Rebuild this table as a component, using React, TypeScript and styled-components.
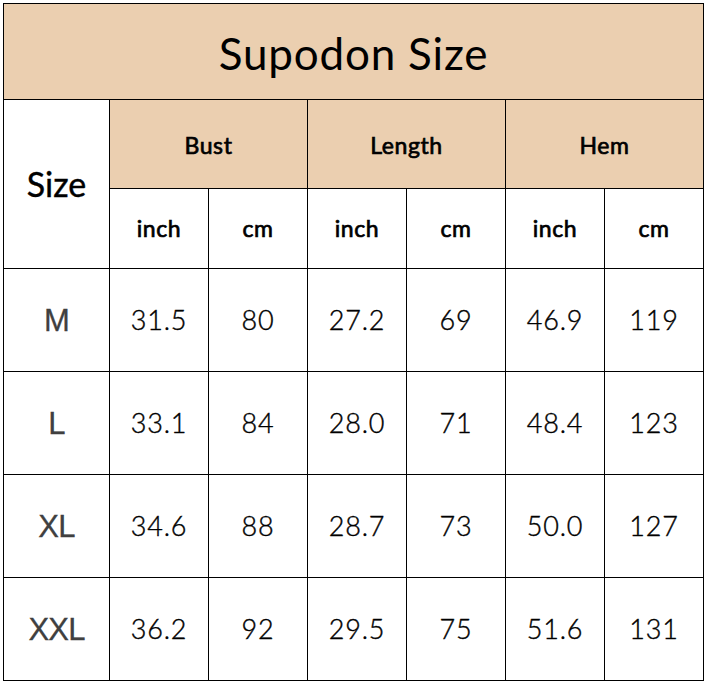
import React from "react";
import styled, { createGlobalStyle } from "styled-components";

const Global = createGlobalStyle`
  html, body { margin: 0; padding: 0; background: #ffffff; }
  body { font-family: "Lato", "Noto Sans", sans-serif; }
`;

const Page = styled.div`
  padding: 3px 0 0 3px;
`;

const Table = styled.div`
  display: grid;
  grid-template-columns: 105px repeat(6, 98px);
  grid-template-rows: 95px 88px 79px repeat(4, 102px);
  gap: 1px;
  padding: 1px;
  background: #000000;
  width: max-content;
`;

const Cell = styled.div<{ $tan?: boolean; $span?: number; $rows?: number }>`
  display: flex;
  align-items: center;
  justify-content: center;
  background: ${(p) => (p.$tan ? "#ebcfb0" : "#ffffff")};
  color: #000000;
  ${(p) => (p.$span ? `grid-column: span ${p.$span};` : "")}
  ${(p) => (p.$rows ? `grid-row: span ${p.$rows};` : "")}
`;

const Title = styled(Cell)`
  font-size: 44px;
  font-weight: 400;
  letter-spacing: 0.8px;
  padding-top: 2px;
`;

const SizeHead = styled(Cell)`
  font-size: 34px;
  font-weight: 400;
  -webkit-text-stroke: 0.4px #000;
  padding-bottom: 2px;
`;

const GroupHead = styled(Cell)`
  font-size: 23px;
  font-weight: 400;
  -webkit-text-stroke: 0.7px #000;
  letter-spacing: 0.6px;
  padding-top: 2px;
`;

const UnitHead = styled(Cell)`
  font-size: 23px;
  font-weight: 400;
  -webkit-text-stroke: 0.7px #000;
  letter-spacing: 0.6px;
  padding-bottom: 2px;
`;

const SizeLabel = styled(Cell)`
  font-family: "Liberation Sans", Arial, sans-serif;
  font-size: 31px;
  color: #404040;
  -webkit-text-stroke: 0.3px #404040;
  letter-spacing: -0.8px;
  padding-top: 2px;
`;

const Value = styled(Cell)`
  font-size: 27px;
  font-weight: 300;
  -webkit-text-stroke: 0.4px #000;
  letter-spacing: 0.8px;
  padding-bottom: 2px;
`;

const rows: [string, string[]][] = [
  ["M", ["31.5", "80", "27.2", "69", "46.9", "119"]],
  ["L", ["33.1", "84", "28.0", "71", "48.4", "123"]],
  ["XL", ["34.6", "88", "28.7", "73", "50.0", "127"]],
  ["XXL", ["36.2", "92", "29.5", "75", "51.6", "131"]],
];

export default function App() {
  return (
    <Page>
      <Global />
      <Table>
        <Title $tan $span={7}>Supodon Size</Title>
        <SizeHead $rows={2}>Size</SizeHead>
        <GroupHead $tan $span={2}>Bust</GroupHead>
        <GroupHead $tan $span={2}>Length</GroupHead>
        <GroupHead $tan $span={2}>Hem</GroupHead>
        {["inch", "cm", "inch", "cm", "inch", "cm"].map((u, i) => (
          <UnitHead key={i}>{u}</UnitHead>
        ))}
        {rows.map(([size, vals]) => (
          <React.Fragment key={size}>
            <SizeLabel>{size}</SizeLabel>
            {vals.map((v, i) => (
              <Value key={i}>{v}</Value>
            ))}
          </React.Fragment>
        ))}
      </Table>
    </Page>
  );
}
